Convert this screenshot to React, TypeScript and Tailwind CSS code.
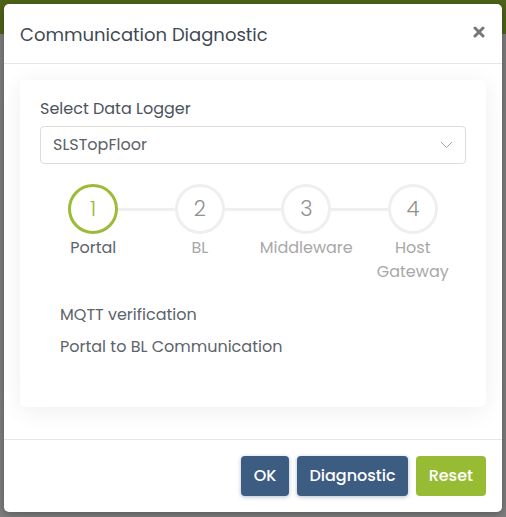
import React from "react";

const steps = [
  { n: "1", label: "Portal", active: true },
  { n: "2", label: "BL", active: false },
  { n: "3", label: "Middleware", active: false },
  { n: "4", label: "Host Gateway", active: false },
];

function Circle({ n, active }: { n: string; active: boolean }) {
  return (
    <div
      className={
        active
          ? "flex h-[50px] w-[50px] shrink-0 items-center justify-center rounded-full border-[3px] border-[#9cbb38] text-[21px] font-light text-[#9cbb38]"
          : "flex h-[50px] w-[50px] shrink-0 items-center justify-center rounded-full border-[3px] border-[#efefef] text-[21px] font-light text-[#8f8f8f]"
      }
    >
      {n}
    </div>
  );
}

export default function App() {
  return (
    <div
      className="h-[517px] w-[506px] overflow-hidden bg-[linear-gradient(#4e6319_34px,#7e7e7e_34px)] pt-1"
      style={{ fontFamily: "Poppins, 'Open Sans', sans-serif" }}
    >
      <div className="mx-1 flex h-[508px] flex-col rounded-[5px] bg-white shadow-[0_2px_8px_rgba(0,0,0,0.3)]">
        <div className="flex h-[60px] items-center justify-between border-b border-[#e6e6e6] pl-4 pr-[17px]">
          <h1 className="mt-[1px] text-[18px] font-normal text-[#3f4953]">Communication Diagnostic</h1>
          <svg width="12" height="12" viewBox="0 0 12 12" className="mb-[4px]">
            <path d="M2 2 L10 10 M10 2 L2 10" stroke="#777" strokeWidth="3" strokeLinecap="round" />
          </svg>
        </div>
        <div className="flex-1 px-4 pt-4">
          <div className="h-[327px] rounded-[5px] bg-white px-5 pt-[17px] shadow-[0_4px_24px_rgba(0,0,0,0.07)]">
            <div className="text-[16px] leading-6 text-[#4a545d]">Select Data Logger</div>
            <div className="mt-[5px] flex h-[38px] items-center justify-between rounded-[4px] border border-[#dcdcdc] pl-[12px] pr-[12px]">
              <span className="text-[16px] text-[#5b6268]">SLSTopFloor</span>
              <svg width="13" height="8" viewBox="0 0 13 8">
                <path d="M1 1 L6.5 6.5 L12 1" fill="none" stroke="#a5a5a5" strokeWidth="1" />
              </svg>
            </div>
            <div className="mt-[20px] flex items-center px-[28px]">
              {steps.map((s, i) => (
                <React.Fragment key={s.n}>
                  <Circle n={s.n} active={s.active} />
                  {i < steps.length - 1 && <div className="h-[3px] flex-1 bg-[#efefef]" />}
                </React.Fragment>
              ))}
            </div>
            <div className="mt-[2px] grid grid-cols-4 text-center text-[16px] leading-6">
              {steps.map((s) => (
                <div key={s.n} className={s.active ? "px-1 text-[#5c646b]" : "px-1 text-[#a8a8a8]"}>
                  {s.label}
                </div>
              ))}
            </div>
            <div className="mt-[15px] pl-5 text-[16px] leading-8 text-[#5c646b]">
              <div>MQTT verification</div>
              <div>Portal to BL Communication</div>
            </div>
          </div>
        </div>
        <div className="flex justify-end gap-2 border-t border-[#e6e6e6] px-4 pb-4 pt-4">
          <button className="h-10 rounded-[4px] bg-[#3d5c82] px-[13px] text-[16px] font-medium text-white shadow-[0_1px_4px_rgba(61,92,130,0.4)]">
            OK
          </button>
          <button className="h-10 rounded-[4px] bg-[#3d5c82] px-[12px] text-[16px] font-medium text-white shadow-[0_1px_4px_rgba(61,92,130,0.4)]">
            Diagnostic
          </button>
          <button className="h-10 rounded-[4px] bg-[#98bb34] px-[13px] text-[16px] font-medium text-white">
            Reset
          </button>
        </div>
      </div>
    </div>
  );
}
